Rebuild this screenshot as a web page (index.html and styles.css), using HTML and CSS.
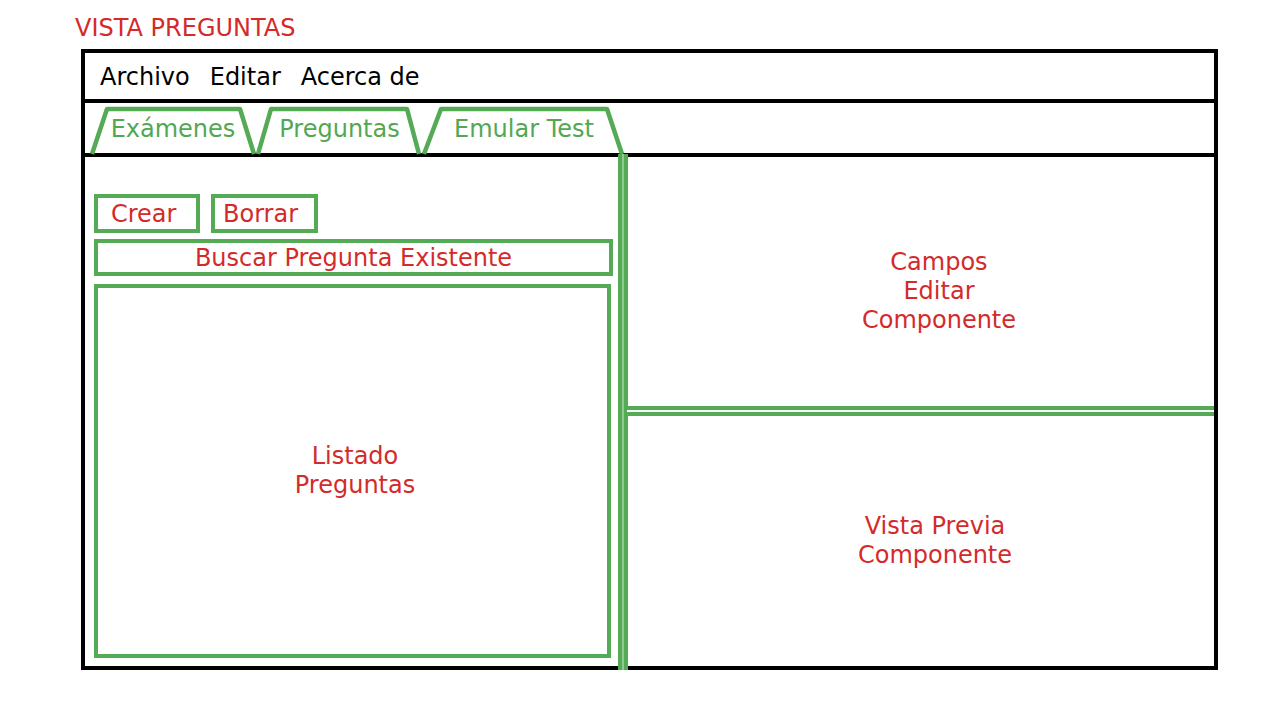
FILE: index.html
```html
<!DOCTYPE html>
<html lang="es">

<head>
    <meta charset="UTF-8">
    <meta name="viewport" content="width=device-width, initial-scale=1.0">
    <title>Vista Preguntas</title>
    <link rel="stylesheet" href="styles.css">
</head>

<body>
    <h1 class="title">VISTA PREGUNTAS</h1>

    <div class="window">
        <!-- Menu -->
        <div class="menu">
            <span>Archivo</span>
            <span>Editar</span>
            <span>Acerca de</span>
        </div>

        <!-- Tabs -->
        <div class="tabs">
            <div class="tab tab-1">
                <svg class="tab-shape" viewBox="0 0 168 50" preserveAspectRatio="none">
                    <polyline points="3,51 18,6 151,6 165,51" />
                </svg>
                <span>Exámenes</span>
            </div>
            <div class="tab tab-2">
                <svg class="tab-shape" viewBox="0 0 165 50" preserveAspectRatio="none">
                    <polyline points="1,51 14,6 150,6 162,51" />
                </svg>
                <span>Preguntas</span>
            </div>
            <div class="tab tab-3">
                <svg class="tab-shape" viewBox="0 0 204 50" preserveAspectRatio="none">
                    <polyline points="2,51 19,6 185,6 200,51" />
                </svg>
                <span>Emular Test</span>
            </div>
        </div>

        <!-- Content -->
        <div class="content">
            <div class="left-pane">
                <div class="actions">
                    <div class="box btn btn-crear">Crear</div>
                    <div class="box btn btn-borrar">Borrar</div>
                </div>
                <div class="box search">Buscar Pregunta Existente</div>
                <div class="box list">Listado<br>Preguntas</div>
            </div>

            <div class="v-split"></div>

            <div class="right-pane">
                <div class="pane-block edit-fields">Campos<br>Editar<br>Componente</div>
                <div class="h-split"></div>
                <div class="pane-block preview">Vista Previa<br>Componente</div>
            </div>
        </div>
    </div>
</body>

</html>
```

FILE: styles.css
```css
/* General Styles */
body {
    margin: 0;
    padding: 14px 0 0 0;
    background: #fff;
    font-family: "DejaVu Sans", Verdana, sans-serif;
    font-size: 24px;
}

.title {
    margin: 0 0 7px 75px;
    font-size: 24px;
    font-weight: normal;
    line-height: 28px;
    color: #d42a2a;
}

/* Window frame */
.window {
    box-sizing: border-box;
    width: 1137px;
    height: 621px;
    margin-left: 81px;
    border: 4px solid #000;
    display: flex;
    flex-direction: column;
}

/* Menu */
.menu {
    height: 46px;
    border-bottom: 4px solid #000;
    display: flex;
    align-items: center;
    gap: 20px;
    padding: 2px 0 0 15px;
    box-sizing: content-box;
    height: 44px;
    color: #000;
}

/* Tabs */
.tabs {
    height: 50px;
    border-bottom: 4px solid #000;
    display: flex;
    padding-left: 4px;
}

.tab {
    position: relative;
    height: 50px;
    display: flex;
    align-items: center;
    justify-content: center;
    color: #52a852;
}

.tab span {
    position: relative;
    margin-top: 2px;
}

.tab-1 { width: 168px; }
.tab-2 { width: 165px; }
.tab-3 { width: 204px; }

.tab-shape {
    position: absolute;
    left: 0;
    top: 0;
    width: 100%;
    height: 100%;
    overflow: visible;
}

.tab-shape polyline {
    fill: none;
    stroke: #55aa55;
    stroke-width: 4.5;
    stroke-linejoin: round;
}

/* Content */
.content {
    flex: 1;
    display: flex;
    color: #d42a2a;
}

.left-pane {
    box-sizing: border-box;
    width: 533px;
    padding: 37px 5px 8px 9px;
    display: flex;
    flex-direction: column;
}

.box {
    box-sizing: border-box;
    border: 4px solid #55aa55;
}

.actions {
    display: flex;
    gap: 11px;
    height: 39px;
}

.btn {
    display: flex;
    align-items: center;
}

.btn-crear {
    width: 106px;
    padding-left: 13px;
}

.btn-borrar {
    width: 107px;
    padding-left: 8px;
}

.search {
    height: 37px;
    margin-top: 6px;
    display: flex;
    align-items: center;
    justify-content: center;
}

.list {
    width: 517px;
    flex: 1;
    margin-top: 8px;
    display: flex;
    align-items: center;
    justify-content: center;
    text-align: center;
    line-height: 29px;
    padding-left: 5px;
}

/* Splitters */
.v-split {
    width: 10px;
    margin: -3px 0 -4px 0;
    background: linear-gradient(to right, #55aa55 0, #55aa55 4px, #8fca8f 4px, #8fca8f 6px, #55aa55 6px, #55aa55 10px);
}

.right-pane {
    flex: 1;
    display: flex;
    flex-direction: column;
}

.h-split {
    height: 2px;
    margin-left: -1px;
    border-top: 4px solid #55aa55;
    border-bottom: 4px solid #55aa55;
    background: #fff;
}

.pane-block {
    box-sizing: border-box;
    display: flex;
    align-items: center;
    justify-content: center;
    text-align: center;
    line-height: 29px;
}

.edit-fields {
    height: 249px;
    padding: 19px 0 0 36px;
}

.preview {
    flex: 1;
    padding-left: 28px;
}
```
